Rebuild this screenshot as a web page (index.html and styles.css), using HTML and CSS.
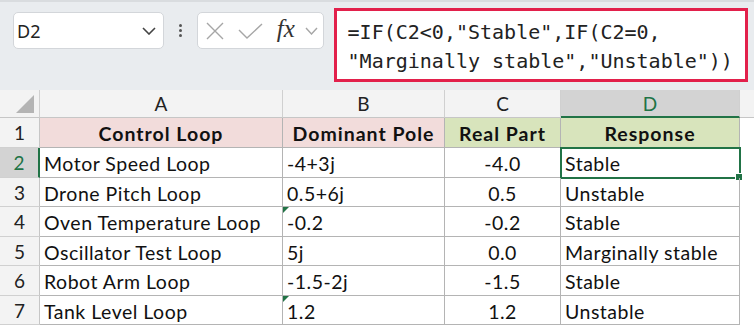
FILE: index.html
```html
<!DOCTYPE html>
<html lang="en">

<head>
    <meta charset="UTF-8">
    <title>Control Loop Stability</title>
    <link rel="stylesheet" href="styles.css">
</head>

<body>
    <div class="topbar">
        <div class="namebox">
            <span class="name">D2</span>
            <svg class="chev" width="14" height="8" viewBox="0 0 14 8"><path d="M1 1 L7 7 L13 1" fill="none" stroke="#444" stroke-width="1.6"/></svg>
        </div>
        <div class="dots"><i></i><i></i><i></i></div>
        <div class="fxbox">
            <svg width="18" height="18" viewBox="0 0 18 18"><path d="M1 1 L17 17 M17 1 L1 17" stroke="#a6a6a6" stroke-width="1.4"/></svg>
            <svg width="25" height="16" viewBox="0 0 25 16"><path d="M1 7 L9 15 L24 1" fill="none" stroke="#a6a6a6" stroke-width="1.4"/></svg>
            <span class="fx">fx</span>
            <svg width="13" height="8" viewBox="0 0 13 8"><path d="M1 1 L6.5 7 L12 1" fill="none" stroke="#a6a6a6" stroke-width="1.4"/></svg>
        </div>
        <div class="formula">
            <div class="line">=IF(C2&lt;0,"Stable",IF(C2=0,</div>
            <div class="line">"Marginally stable","Unstable"))</div>
        </div>
    </div>

    <div class="sheet">
        <div class="corner"><span class="tri"></span></div>
        <div class="colhead">A</div>
        <div class="colhead">B</div>
        <div class="colhead">C</div>
        <div class="colhead sel">D</div>
        <div class="colhead blank"></div>

        <div class="rowhead">1</div>
        <div class="cell th pink">Control Loop</div>
        <div class="cell th pink">Dominant Pole</div>
        <div class="cell th green">Real Part</div>
        <div class="cell th green">Response</div>
        <div class="gap"></div>

        <div class="rowhead sel">2</div>
        <div class="cell">Motor Speed Loop</div>
        <div class="cell">-4+3j</div>
        <div class="cell num">-4.0</div>
        <div class="cell active">Stable<span class="handle"></span></div>
        <div class="gap"></div>

        <div class="rowhead">3</div>
        <div class="cell">Drone Pitch Loop</div>
        <div class="cell">0.5+6j</div>
        <div class="cell num">0.5</div>
        <div class="cell">Unstable</div>
        <div class="gap"></div>

        <div class="rowhead">4</div>
        <div class="cell">Oven Temperature Loop</div>
        <div class="cell flag">-0.2</div>
        <div class="cell num">-0.2</div>
        <div class="cell">Stable</div>
        <div class="gap"></div>

        <div class="rowhead">5</div>
        <div class="cell">Oscillator Test Loop</div>
        <div class="cell">5j</div>
        <div class="cell num">0.0</div>
        <div class="cell">Marginally stable</div>
        <div class="gap"></div>

        <div class="rowhead">6</div>
        <div class="cell">Robot Arm Loop</div>
        <div class="cell">-1.5-2j</div>
        <div class="cell num">-1.5</div>
        <div class="cell">Stable</div>
        <div class="gap"></div>

        <div class="rowhead">7</div>
        <div class="cell">Tank Level Loop</div>
        <div class="cell flag">1.2</div>
        <div class="cell num">1.2</div>
        <div class="cell">Unstable</div>
        <div class="gap"></div>
    </div>
</body>

</html>
```

FILE: styles.css
```css
body {
    margin: 0;
    width: 754px;
    height: 328px;
    overflow: hidden;
    background: #ffffff;
    font-family: Lato, "Liberation Sans", sans-serif;
}

.topbar {
    height: 90px;
    background: #e9ecef;
    border-top: 2px solid #d9dcdf;
    box-sizing: border-box;
    display: flex;
    align-items: flex-start;
    padding: 10px 6px 0 13px;
}

.namebox {
    width: 151px;
    height: 37px;
    box-sizing: border-box;
    background: #fff;
    border: 1px solid #d3d6da;
    border-radius: 5px;
    display: flex;
    align-items: center;
    justify-content: space-between;
    padding: 0 7px 0 3px;
    font-family: "Noto Sans", sans-serif;
    font-size: 18px;
    color: #222;
}

.dots {
    width: 33px;
    height: 37px;
    display: flex;
    flex-direction: column;
    align-items: center;
    justify-content: center;
    gap: 2px;
}

.dots i {
    width: 3px;
    height: 3px;
    background: #555;
    border-radius: 50%;
}

.fxbox {
    width: 127px;
    height: 37px;
    box-sizing: border-box;
    background: #fff;
    border: 1px solid #d3d6da;
    border-radius: 5px;
    display: flex;
    align-items: center;
    padding: 0 4px 0 8px;
    gap: 14px;
}

.fx {
    font-family: "Liberation Serif", serif;
    font-style: italic;
    font-size: 25px;
    color: #333;
    margin-right: -4px;
    margin-top: -3px;
}

.formula {
    margin-left: 10px;
    margin-top: -4px;
    width: 415px;
    height: 74px;
    box-sizing: border-box;
    background: #fff;
    border: 3px solid #e2204b;
    padding: 7px 0 0 11px;
    font-family: "DejaVu Sans Mono", monospace;
    font-size: 20px;
    line-height: 29px;
    color: #222;
}

.line {
    white-space: nowrap;
}

.sheet {
    display: grid;
    grid-template-columns: 40px 243px 162px 116px 179px 14px;
    grid-template-rows: 28px 30px 30px 29px 30px 29px 30px 29px;
    font-size: 19.5px;
    letter-spacing: 0.5px;
    color: #111;
}

.corner,
.colhead {
    background: #f3f3f3;
    border-right: 1px solid #d0d0d0;
    border-bottom: 1px solid #c6c6c6;
    box-sizing: border-box;
}

.corner {
    position: relative;
}

.tri {
    position: absolute;
    right: 5px;
    bottom: 4px;
    width: 0;
    height: 0;
    border-left: 18px solid transparent;
    border-bottom: 18px solid #b4b4b4;
}

.colhead {
    display: flex;
    align-items: center;
    justify-content: center;
    font-size: 19px;
    letter-spacing: 0;
    color: #222;
}

.colhead.sel {
    background: #d3d3d3;
    color: #217346;
    border-bottom: 2px solid #217346;
}

.colhead.blank {
    border-right: none;
}

.rowhead {
    background: #f3f3f3;
    border-right: 1px solid #c6c6c6;
    border-bottom: 1px solid #d0d0d0;
    box-sizing: border-box;
    display: flex;
    align-items: center;
    justify-content: center;
    font-size: 19px;
    letter-spacing: 0;
    color: #222;
}

.rowhead.sel {
    background: #d3d3d3;
    color: #217346;
    border-right: 2px solid #217346;
}

.cell {
    position: relative;
    border-right: 1px solid #b4b4b4;
    border-bottom: 1px solid #b4b4b4;
    box-sizing: border-box;
    display: flex;
    align-items: center;
    padding: 2px 4px 0;
    white-space: nowrap;
}

.th {
    font-weight: bold;
    letter-spacing: 1px;
    justify-content: center;
}

.pink {
    background: #f2dcdb;
}

.green {
    background: #d8e4bc;
}

.num {
    justify-content: center;
}

.flag::before {
    content: "";
    position: absolute;
    left: 0;
    top: 0;
    border-top: 6px solid #217346;
    border-right: 6px solid transparent;
}

.active {
    outline: 2px solid #217346;
    outline-offset: -1px;
}

.handle {
    position: absolute;
    right: -4px;
    bottom: -4px;
    width: 6px;
    height: 6px;
    background: #217346;
    border: 1px solid #fff;
}

.gap {
    background: #fff;
}
```
